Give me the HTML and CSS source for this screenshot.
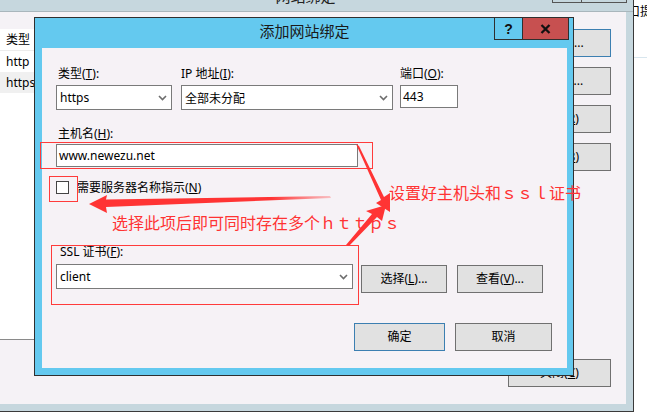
FILE: index.html
```html
<!DOCTYPE html>
<html lang="zh-CN">
<head>
<meta charset="utf-8">
<title>添加网站绑定</title>
<link rel="stylesheet" href="styles.css">
</head>
<body>
<div class="desktop">
  <div class="desk-text">口提</div>
  <div class="desk-line"></div>

  <div class="bgwin">
    <div class="bgwin-title">
      <span class="bgwin-caption">网站绑定</span>
      <div class="bgwin-ctrls"><span class="ctrl-a"></span><span class="ctrl-b"></span></div>
    </div>
    <div class="bgwin-body">
      <div class="list">
        <div class="list-head">类型</div>
        <div class="list-row">http</div>
        <div class="list-row list-row-sel">https</div>
      </div>
      <div class="side">
        <div class="btn btn-default side-btn">添加(<u>A</u>)...</div>
        <div class="btn side-btn">编辑(<u>E</u>)...</div>
        <div class="btn side-btn">删除(<u>R</u>)</div>
        <div class="btn side-btn">浏览(<u>B</u>)</div>
        <div class="btn side-btn side-close">关闭(<u>C</u>)</div>
      </div>
    </div>
  </div>

  <div class="dialog">
    <div class="dlg-title">
      <span>添加网站绑定</span>
      <div class="dlg-ctrls">
        <span class="dlg-help">?</span>
        <span class="dlg-close"><svg width="11" height="10" viewBox="0 0 11 10"><path d="M1.5 1 L9.5 9 M9.5 1 L1.5 9" stroke="#111" stroke-width="2.3" fill="none"/></svg></span>
      </div>
    </div>
    <div class="dlg-body">
      <div class="row-fields">
        <div class="field-col col-type">
          <div class="lbl lbl-in">类型(<u>T</u>):</div>
          <div class="select"><span class="val">https</span><svg class="chev" width="9" height="6" viewBox="0 0 9 6"><polyline points="1,1 4.5,4.5 8,1" fill="none" stroke="#6d6d6d" stroke-width="1.6"/></svg></div>
        </div>
        <div class="field-col col-ip">
          <div class="lbl">IP 地址(<u>I</u>):</div>
          <div class="select"><span class="val">全部未分配</span><svg class="chev" width="9" height="6" viewBox="0 0 9 6"><polyline points="1,1 4.5,4.5 8,1" fill="none" stroke="#6d6d6d" stroke-width="1.6"/></svg></div>
        </div>
        <div class="field-col col-port">
          <div class="lbl">端口(<u>O</u>):</div>
          <div class="input">443</div>
        </div>
      </div>

      <div class="host">
        <div class="lbl lbl-in">主机名(<u>H</u>):</div>
        <div class="input input-host">www.newezu.net</div>
      </div>

      <div class="check-row">
        <span class="checkbox"></span>
        <span class="check-lbl">需要服务器名称指示(<u>N</u>)</span>
      </div>

      <div class="ssl">
        <div class="ssl-col">
          <div class="lbl lbl-ssl">SSL 证书(<u>F</u>):</div>
          <div class="select"><span class="val">client</span><svg class="chev" width="9" height="6" viewBox="0 0 9 6"><polyline points="1,1 4.5,4.5 8,1" fill="none" stroke="#6d6d6d" stroke-width="1.6"/></svg></div>
        </div>
        <div class="ssl-btns">
          <div class="btn btn-86">选择(<u>L</u>)...</div>
          <div class="btn btn-86">查看(<u>V</u>)...</div>
        </div>
      </div>

      <div class="actions">
        <div class="btn btn-default btn-ok">确定</div>
        <div class="btn btn-cancel">取消</div>
      </div>
    </div>
  </div>

  <div class="anno-box box-host"></div>
  <div class="anno-box box-check"></div>
  <div class="anno-box box-ssl"></div>

  <svg class="anno-arrows" width="647" height="412" viewBox="0 0 647 412">
    <defs>
      <linearGradient id="fade" x1="89" y1="0" x2="332" y2="0" gradientUnits="userSpaceOnUse">
        <stop offset="0" stop-color="#ff3434"/>
        <stop offset="0.75" stop-color="#ff3434"/>
        <stop offset="1" stop-color="#ff3434" stop-opacity="0.25"/>
      </linearGradient>
    </defs>
    <polygon points="89,204 107,195 106,199.5 330,196 331,198 106,207 107,213" fill="url(#fade)"/>
    <polygon points="356,144 359,146 384,197 390,193 390,212 376,203 381,200" fill="#ff3434"/>
    <polygon points="346,245 372,214 366,211 386,205 382,221 377,217 349,246" fill="#ff3434"/>
  </svg>

  <div class="anno-text note-multi">选择此项后即可同时存在多个ｈｔｔｐｓ</div>
  <div class="anno-text note-host">设置好主机头和ｓｓｌ证书</div>
</div>
</body>
</html>
```

FILE: styles.css
```css
* { box-sizing: border-box; }
html, body { margin: 0; padding: 0; }
body {
  width: 647px;
  height: 412px;
  overflow: hidden;
  background: #fff;
  font-family: "Noto Sans", "Noto Sans CJK SC", sans-serif;
  font-size: 12px;
  color: #000;
}
u { text-decoration: underline; text-underline-offset: 1px; }

.desktop {
  position: relative;
  width: 647px;
  height: 412px;
  overflow: hidden;
  background: #fff;
}
.desk-text {
  position: absolute;
  left: 628px;
  top: 4px;
  line-height: 16px;
  white-space: nowrap;
}
.desk-line {
  position: absolute;
  left: 634px;
  right: 0;
  top: 57px;
  height: 1px;
  background: #d8e6ee;
}

/* background window */
.bgwin {
  position: absolute;
  left: 0;
  top: 0;
  width: 634px;
  height: 412px;
  background: #c6d7de;
  border-right: 1px solid #3a3a3a;
  border-bottom: 1px solid #3a3a3a;
  padding: 0 7px 7px 0;
  display: flex;
  flex-direction: column;
}
.bgwin-title {
  position: relative;
  flex: none;
  height: 12px;
  margin-right: -7px;
  border-bottom: 1px solid #a9b6bc;
  overflow: hidden;
  display: flex;
  justify-content: center;
  padding-right: 22px;
}
.bgwin-caption {
  font-size: 15px;
  line-height: 20px;
  margin-top: -14px;
  color: #222;
  white-space: nowrap;
}
.bgwin-ctrls {
  position: absolute;
  right: 6px;
  top: 0;
  display: flex;
}
.bgwin-ctrls span {
  height: 3px;
  border: 1px solid #555;
  border-top: none;
}
.ctrl-a { width: 30px; }
.ctrl-b { width: 46px; margin-left: -1px; }

.bgwin-body {
  flex: 1;
  background: #f5f2f6;
  display: flex;
  padding: 17px 15px 17px 0;
}
.list {
  width: 498px;
  height: 311px;
  background: #fff;
  border-bottom: 1px solid #8a8a8a;
}
.list-head {
  height: 22px;
  line-height: 22px;
  padding-left: 6px;
  border-bottom: 1px solid #ececec;
}
.list-row {
  height: 21px;
  line-height: 21px;
  padding-left: 6px;
}
.list-row-sel { background: #f0f0f0; }

.side {
  margin-left: auto;
  width: 103px;
  display: flex;
  flex-direction: column;
  gap: 10px;
}
.side-btn { height: 28px; }
.side-close { margin-top: auto; }

/* buttons */
.btn {
  display: flex;
  align-items: center;
  justify-content: center;
  background: #e1e1e1;
  border: 1px solid #707070;
  white-space: nowrap;
  line-height: 16px;
}
.btn-default { border-color: #3c7fb1; }

/* dialog */
.dialog {
  position: absolute;
  left: 34px;
  top: 17px;
  width: 540px;
  height: 359px;
  border: 1px solid #2f2f2f;
  background: #64c9ef;
  padding: 0 6px 7px 7px;
  display: flex;
  flex-direction: column;
}
.dlg-title {
  position: relative;
  flex: none;
  height: 30px;
  text-align: center;
  font-size: 15px;
  line-height: 20px;
  padding-top: 3px;
  color: #1a1a1a;
}
.dlg-ctrls {
  position: absolute;
  top: -1px;
  right: -2px;
  display: flex;
}
.dlg-help {
  width: 29px;
  height: 23px;
  border: 1px solid #2f2f2f;
  display: flex;
  align-items: center;
  justify-content: center;
  font-family: "Liberation Sans", sans-serif;
  font-weight: bold;
  font-size: 14px;
  color: #111;
}
.dlg-close {
  width: 47px;
  height: 23px;
  margin-left: -1px;
  border: 1px solid #2f2f2f;
  background: #c75050;
  display: flex;
  align-items: center;
  justify-content: center;
}

.dlg-body {
  flex: 1;
  background: #f6f2f6;
  padding: 18px 15px 0 14px;
}
.lbl {
  height: 16px;
  line-height: 16px;
  white-space: nowrap;
}
.lbl-in { padding-left: 2px; }
.lbl-ssl { padding-left: 4px; }

.row-fields { display: flex; }
.field-col {
  display: flex;
  flex-direction: column;
  gap: 3px;
}
.col-type { width: 116px; }
.col-ip { width: 212px; margin-left: 9px; }
.col-port { width: 58px; margin-left: 7px; }

.select {
  height: 25px;
  border: 1px solid #7a7a7a;
  background: #fff;
  display: flex;
  align-items: center;
  padding: 0 4px 0 3px;
  white-space: nowrap;
}
.select .val { flex: 1; }
.chev { flex: none; }
.input {
  height: 23px;
  border: 1px solid #7a7a7a;
  background: #fff;
  display: flex;
  align-items: center;
  padding-left: 2px;
  white-space: nowrap;
}

.host {
  margin-top: 16px;
  display: flex;
  flex-direction: column;
  gap: 2px;
}
.input-host { width: 302px; }

.check-row {
  margin-top: 14px;
  height: 13px;
  display: flex;
  align-items: center;
}
.checkbox {
  width: 13px;
  height: 13px;
  border: 1px solid #444;
  background: #fff;
  flex: none;
}
.check-lbl {
  margin-left: 8px;
  line-height: 16px;
  white-space: nowrap;
}

.ssl {
  margin-top: 50px;
  display: flex;
  align-items: flex-start;
}
.ssl-col {
  width: 297px;
  display: flex;
  flex-direction: column;
  gap: 4px;
}
.ssl-btns {
  margin-left: 8px;
  margin-top: 21px;
  display: flex;
  gap: 10px;
}
.btn-86 { width: 86px; height: 28px; }

.actions {
  margin-top: 30px;
  display: flex;
  justify-content: flex-end;
  gap: 10px;
}
.btn-ok { width: 91px; height: 28px; }
.btn-cancel { width: 97px; height: 28px; }

/* annotations */
.anno-box {
  position: absolute;
  border: 1px solid #ff3b3b;
}
.box-host { left: 40px; top: 142px; width: 333px; height: 27px; }
.box-check { left: 49px; top: 176px; width: 29px; height: 26px; }
.box-ssl { left: 51px; top: 245px; width: 308px; height: 60px; }

.anno-arrows {
  position: absolute;
  left: 0;
  top: 0;
}
.anno-text {
  position: absolute;
  color: #ff3333;
  font-family: "Noto Sans CJK SC", sans-serif;
  font-size: 16px;
  line-height: 16px;
  white-space: nowrap;
}
.note-multi { left: 112px; top: 214px; }
.note-host { left: 389px; top: 184px; }
```
